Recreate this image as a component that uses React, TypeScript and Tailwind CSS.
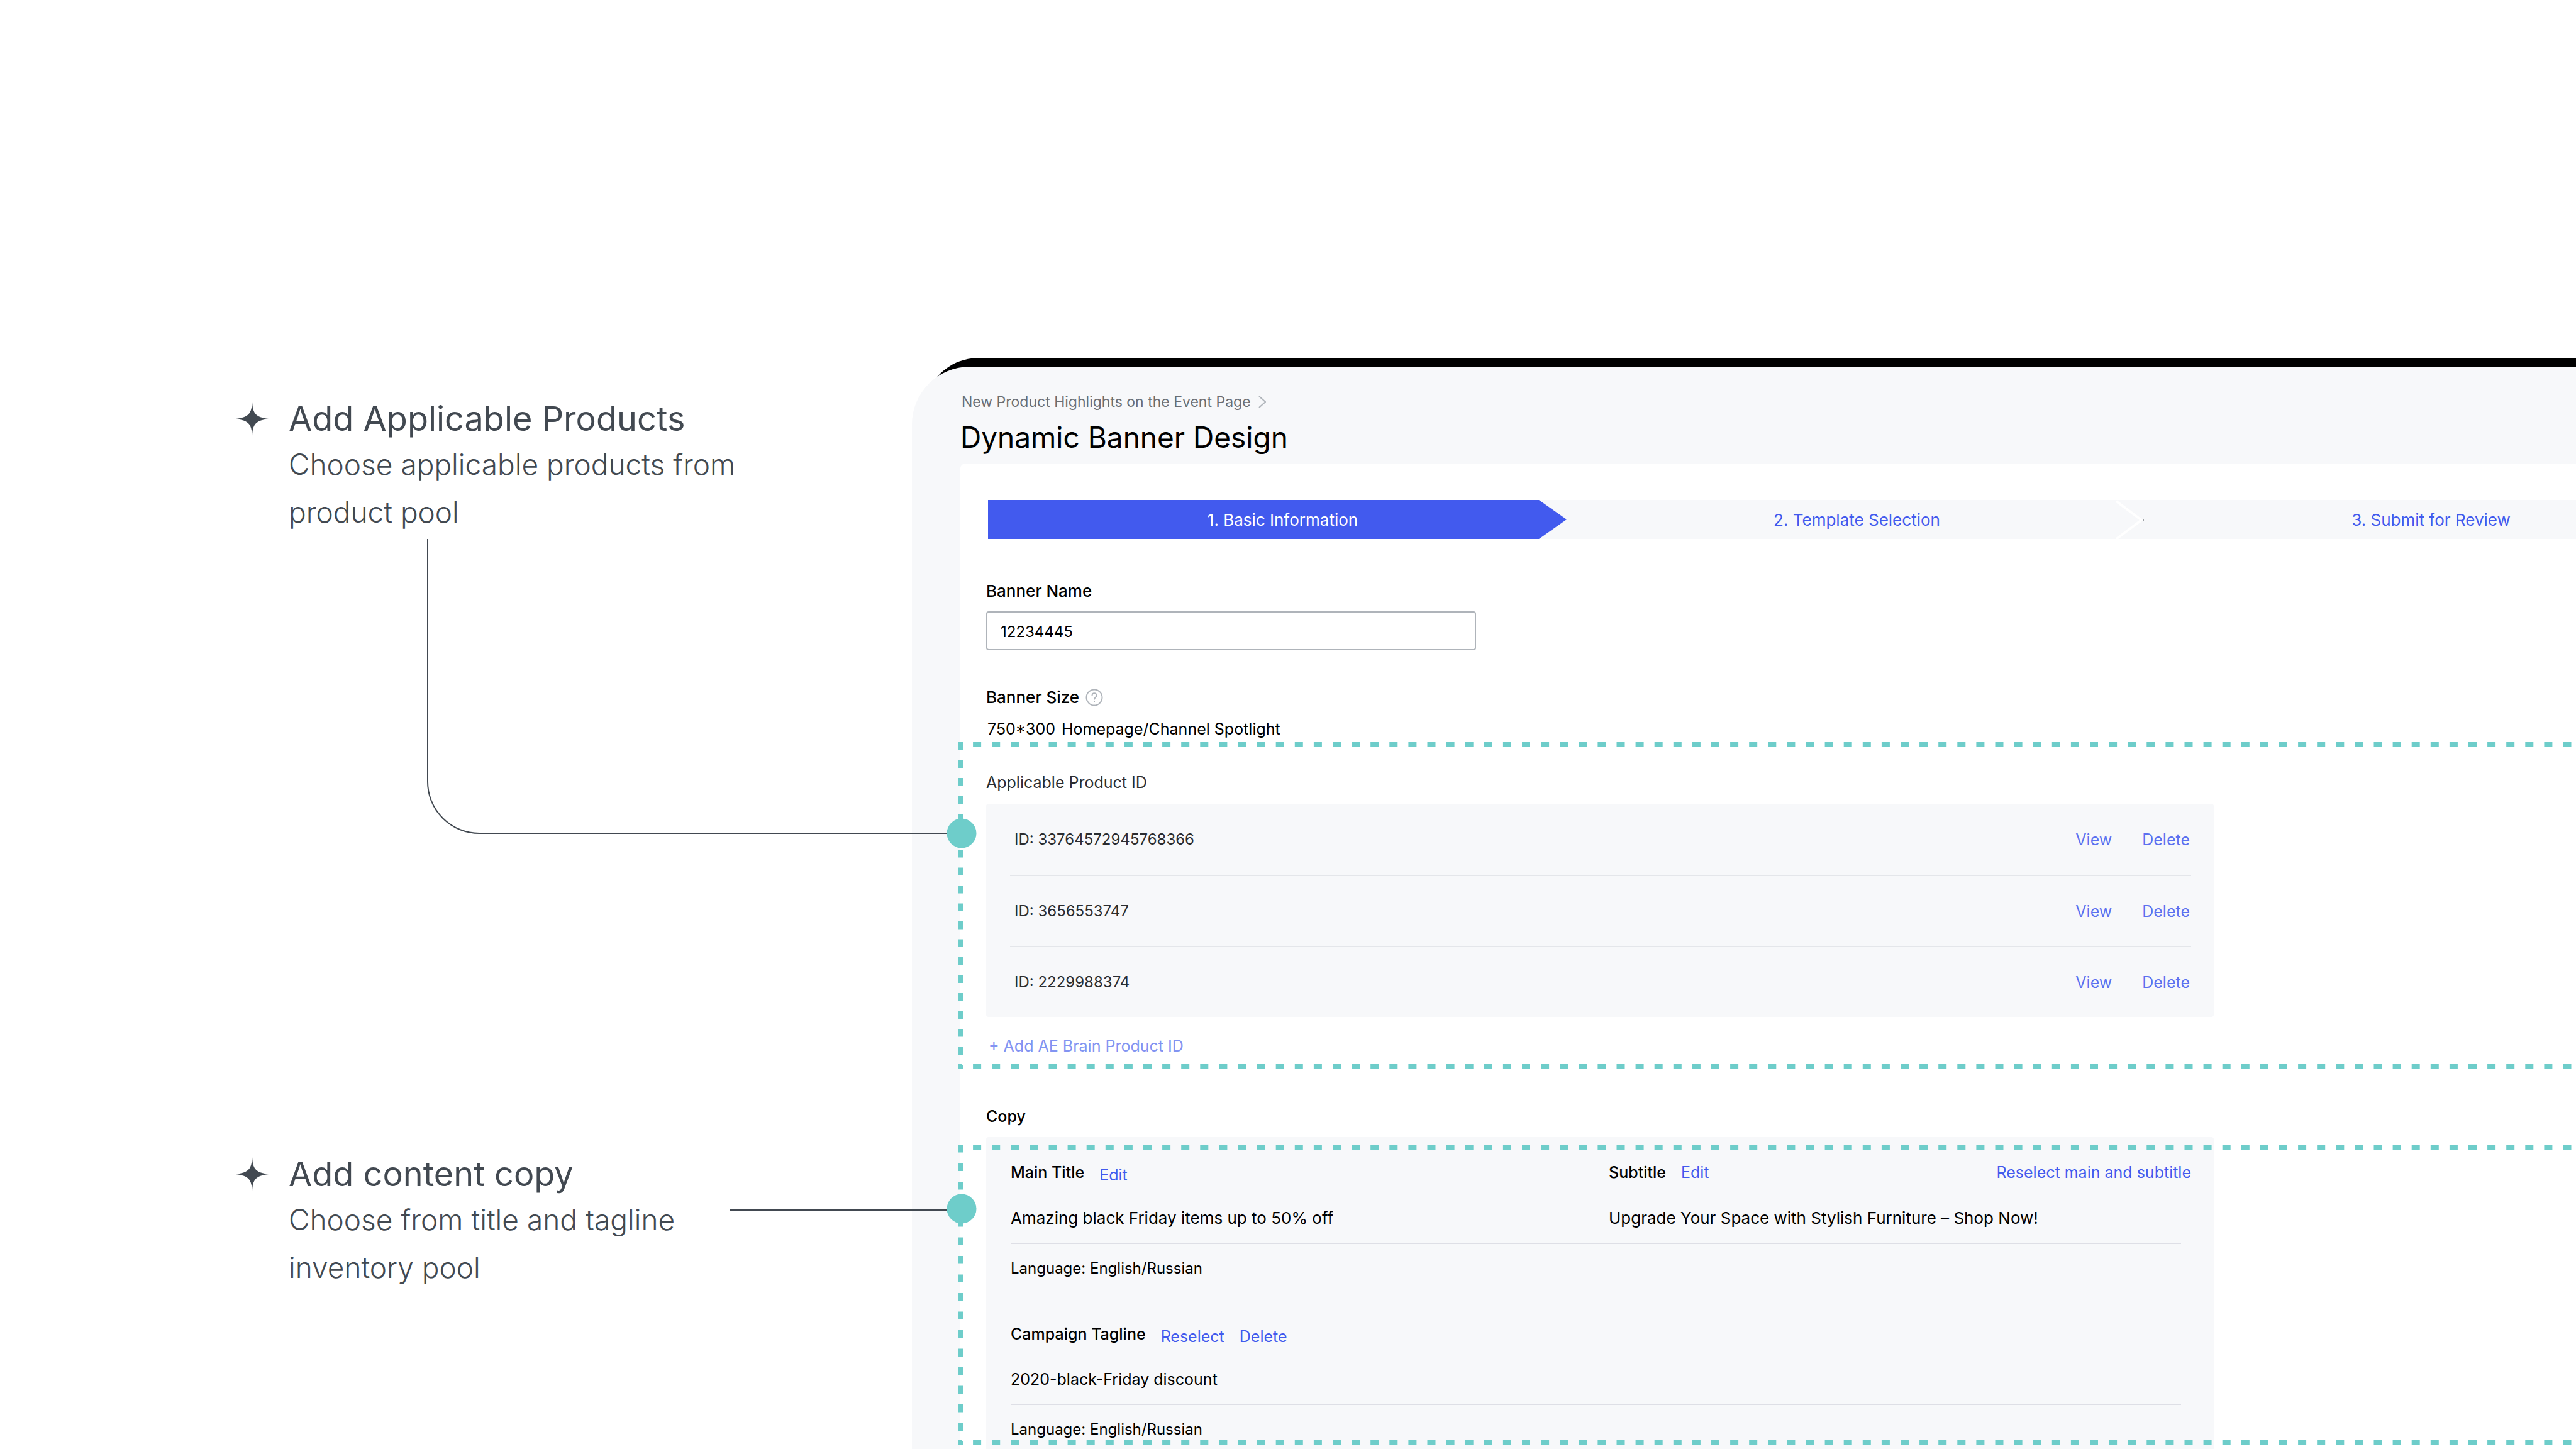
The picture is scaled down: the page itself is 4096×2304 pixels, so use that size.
import { ReactNode } from "react";

const PRODUCT_IDS = ["33764572945768366", "3656553747", "2229988374"];

interface IDashedFrame {
	className: string;
	vertical: string;
}

// dashed outline that bleeds off the right side of the screen
function DashedFrame({ className, vertical }: IDashedFrame) {
	return (
		<svg
			className={`pointer-events-none absolute -left-[45px] w-[calc(100%+45px)] ${className}`}
			stroke="#6ecdca"
			strokeWidth="8"
			fill="none"
			aria-hidden="true"
		>
			<line x1="-6" y1="4" x2="100%" y2="4" strokeDasharray="13 17.1" />
			<svg y="100%" overflow="visible">
				<line x1="-6" y1="-4" x2="100%" y2="-4" strokeDasharray="13 17.1" />
			</svg>
			<line x1="4.5" y1="0" x2="4.5" y2="100%" strokeDasharray={vertical} strokeWidth="9" />
		</svg>
	);
}

function Sparkle() {
	return (
		<svg viewBox="0 0 52 54" className="mt-[7px] h-[54px] w-[52px] shrink-0" fill="#424951" aria-hidden="true">
			<path d="M26 0 C27 18 31 24.5 52 27 C31 29.500 27 36 26 54 C25 36 21 29.500 0 27 C21 24.500 25 18 26 0 Z" />
		</svg>
	);
}

interface ICallout {
	title: string;
	className: string;
	children: ReactNode;
	connector: ReactNode;
}

function Callout({ title, className, children, connector }: ICallout) {
	return (
		<article className={`relative flex gap-8 text-[#424951] ${className}`}>
			<Sparkle />
			<div>
				<h2 className="text-[54px] leading-[68px]">{title}</h2>
				<p className="text-[46px] font-light leading-[76px]">{children}</p>
			</div>
			{connector}
		</article>
	);
}

function LinkButton({ children }: { children: ReactNode }) {
	return (
		<button type="button" className="text-[25px] leading-8 text-[#425aee]">
			{children}
		</button>
	);
}

function Steps() {
	return (
		<div className="relative ml-[3px] mr-[-226px] h-[62px] bg-[#f7f8fa]">
			<svg viewBox="0 0 920 62" className="absolute left-0 top-0 h-[62px] w-[920px]" aria-hidden="true">
				<path d="M0 0 H876 L920 31 L876 62 H0 Z" fill="#425aee" />
			</svg>
			<svg viewBox="0 0 46 62" className="absolute left-[1792px] top-0 h-[62px] w-[46px]" aria-hidden="true">
				<path d="M2 2 L42 32 L2 62" fill="none" stroke="#fff" strokeWidth="4" />
				<path d="M45 31 V33" stroke="#424951" strokeWidth="1" />
			</svg>
			<ol className="relative grid h-full grid-cols-3 items-center pl-3 text-center text-[26px] text-[#425aee]">
				<li className="text-white">1. Basic Information</li>
				<li>2. Template Selection</li>
				<li>3. Submit for Review</li>
			</ol>
		</div>
	);
}

function ProductList() {
	return (
		<section className="relative mt-[5px] pb-[21px] pt-12 text-[25px] leading-8 text-[#2b2d30]">
			<h3>Applicable Product ID</h3>
			<ul className="mt-[18px] w-[1952px] rounded bg-[#f7f8fa] pl-[38px] pr-9">
				{PRODUCT_IDS.map((id) => (
					<li
						key={id}
						className="flex h-[113px] items-center border-t-2 border-[#e4e6ea] pl-[7px] pr-0.5 first:border-t-0"
					>
						<p className="grow text-[24px]">ID: {id}</p>
						<div className="flex gap-12 text-[#5c71f0]">
							<button type="button">View</button>
							<button type="button">Delete</button>
						</div>
					</li>
				))}
			</ul>
			<button type="button" className="ml-1 mt-[30px] block text-[#8294f2]">
				+ Add AE Brain Product ID
			</button>
			<DashedFrame className="top-0 h-[520px]" vertical="12.5 16" />
		</section>
	);
}

function CopySection() {
	return (
		<section className="relative mt-[17px] text-[25px] leading-8">
			<div className="w-[1952px] rounded bg-[#f7f8fa] pb-16 pl-[39px] pr-9 pt-10">
				<div className="grid grid-cols-[951px_1fr]">
					<div className="flex h-8 gap-6">
						<h4 className="font-medium">Main Title</h4>
						<div className="pt-1">
							<LinkButton>Edit</LinkButton>
						</div>
					</div>
					<div className="flex h-8 gap-6">
						<h4 className="font-medium">Subtitle</h4>
						<LinkButton>Edit</LinkButton>
						<div className="ml-auto">
							<LinkButton>Reselect main and subtitle</LinkButton>
						</div>
					</div>
				</div>
				<div className="mr-4 mt-[37px] grid grid-cols-[951px_1fr] border-b-2 border-[#dedfe6] pb-[19px] text-[26px] leading-10">
					<p>Amazing black Friday items up to 50% off</p>
					<p>Upgrade Your Space with Stylish Furniture – Shop Now!</p>
				</div>
				<p className="mt-[23px] text-[24px]">Language: English/Russian</p>

				<div className="mt-[72px] flex h-8 gap-6">
					<h4 className="font-medium">Campaign Tagline</h4>
					<div className="flex gap-6 pt-1">
						<LinkButton>Reselect</LinkButton>
						<LinkButton>Delete</LinkButton>
					</div>
				</div>
				<p className="mr-4 mt-10 border-b-2 border-[#dedfe6] pb-[23px]">2020-black-Friday discount</p>
				<p className="mt-[23px] text-[24px]">Language: English/Russian</p>
			</div>
			<DashedFrame className="top-3 h-[477px]" vertical="12.5 17" />
		</section>
	);
}

export default function App() {
	return (
		<div className="flex h-screen overflow-hidden bg-white font-['Inter',sans-serif] text-black">
			<aside className="relative z-10 w-[1450px] shrink-0 pl-[375px] pt-[632px]">
				<Callout
					title="Add Applicable Products"
					className="h-[222px]"
					connector={
						<svg
							viewBox="0 0 876 494"
							className="absolute left-[303px] top-[225px] h-[494px] w-[876px]"
							aria-hidden="true"
						>
							<path
								d="M2 0 V386 A82 82 0 0 0 84 468 H830"
								fill="none"
								stroke="#424951"
								strokeWidth="2"
							/>
							<circle cx="851" cy="468" r="23.500" fill="#6ecdca" />
						</svg>
					}
				>
					Choose applicable products from
					<br />
					product pool
				</Callout>
				<Callout
					title="Add content copy"
					className="mt-[979px]"
					connector={
						<svg
							viewBox="0 0 396 48"
							className="absolute left-[785px] top-[65px] h-12 w-[396px]"
							aria-hidden="true"
						>
							<path d="M0 26 H350" stroke="#424951" strokeWidth="2" />
							<circle cx="369" cy="24" r="23.500" fill="#6ecdca" />
						</svg>
					}
				>
					Choose from title and tagline
					<br />
					inventory pool
				</Callout>
			</aside>

			<main className="relative mt-[569px] min-w-0 grow pt-3.5 before:absolute before:left-[19px] before:right-0 before:top-0 before:h-48 before:rounded-tl-[87px] before:bg-black">
				<div className="relative rounded-tl-[92px] bg-[#f7f8fa] pl-[77px] pt-10">
					<nav className="flex items-center gap-3 pl-0.5 text-[23px] leading-8 text-[#6b6e73]">
						<a href="#events">New Product Highlights on the Event Page</a>
						<svg viewBox="0 0 12 20" className="h-5 w-3" fill="none" stroke="#afb4ba" strokeWidth="2" aria-hidden="true">
							<path d="M1 1 L11 10 L1 19" />
						</svg>
					</nav>
					<h1 className="mt-2 text-[46px] leading-[64px]">Dynamic Banner Design</h1>

					<div className="mt-2.5 rounded-tl-lg bg-white pl-[41px] pt-[58px]">
						<Steps />
						<label htmlFor="banner-name" className="mt-[65px] block text-[26px] font-medium leading-9">
							Banner Name
						</label>
						<input
							id="banner-name"
							defaultValue="12234445"
							className="mt-3.5 block h-[62px] w-[779px] rounded border-2 border-[#afb4ba] bg-white px-[21px] pt-0.5 text-[24px]"
						/>
						<div className="mt-[57px] flex items-center gap-2.5 text-[26px] font-medium leading-9">
							<h3>Banner Size</h3>
							<svg viewBox="0 0 28 28" className="h-7 w-7" fill="none" stroke="#afb4ba" strokeWidth="2" aria-hidden="true">
								<circle cx="14" cy="14" r="12.500" />
								<path d="M10.500 11 C10.500 6 17.500 6 17.500 11 C17.500 14 14 13.500 14 17.500" />
								<path d="M14 19.500 V22" />
							</svg>
						</div>
						<p className="ml-0.5 mt-4 flex gap-2.5 text-[25px] leading-8">
							<span>750*300</span>
							<span>Homepage/Channel Spotlight</span>
						</p>
						<ProductList />
						<h3 className="mt-[59px] text-[25px] font-medium leading-8">Copy</h3>
						<CopySection />
					</div>
				</div>
			</main>
		</div>
	);
}
